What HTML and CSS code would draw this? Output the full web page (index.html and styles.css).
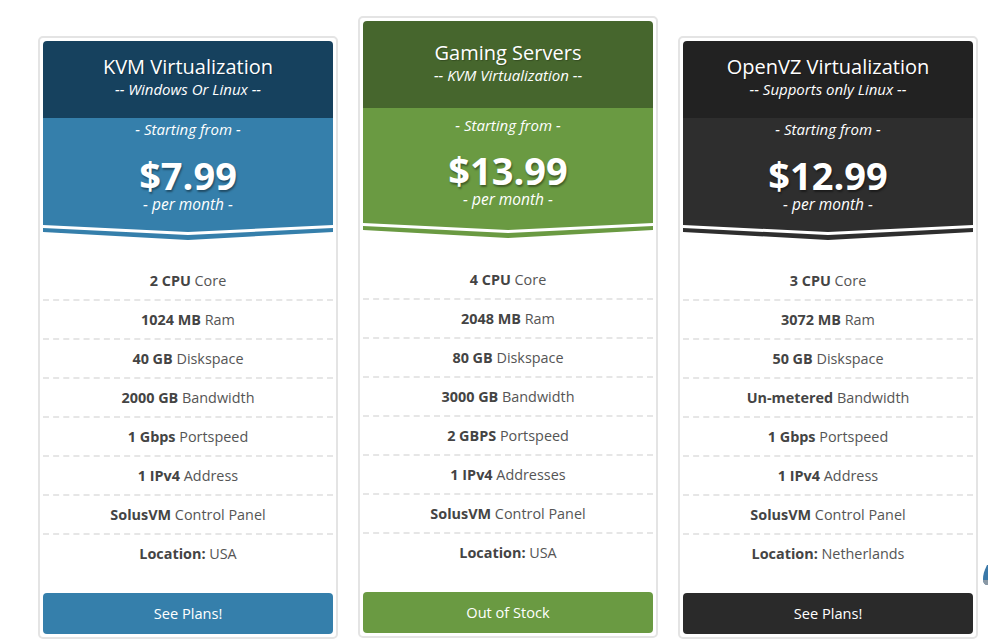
FILE: index.html
```html
<!DOCTYPE html>
<html lang="en">
<head>
<meta charset="utf-8">
<title>Plans</title>
<link rel="stylesheet" href="styles.css">
</head>
<body>
<div class="plans">
  <div class="card card-blue">
    <div class="head">
      <div class="title">KVM Virtualization</div>
      <div class="sub">-- Windows Or Linux --</div>
    </div>
    <div class="price">
      <div class="from">- Starting from -</div>
      <div class="amount">$7.99</div>
      <div class="per">- per month -</div>
    </div>
    <svg class="chev" viewBox="0 0 290 17" preserveAspectRatio="none"><polygon points="0,0 290,0 145,7"/><polygon points="0,3 145,10 290,3 290,7 145,15 0,7"/></svg>
    <ul class="feats">
      <li><b>2 CPU</b> Core</li>
      <li><b>1024 MB</b> Ram</li>
      <li><b>40 GB</b> Diskspace</li>
      <li><b>2000 GB</b> Bandwidth</li>
      <li><b>1 Gbps</b> Portspeed</li>
      <li><b>1 IPv4</b> Address</li>
      <li><b>SolusVM</b> Control Panel</li>
      <li><b>Location:</b> USA</li>
    </ul>
    <a class="btn">See Plans!</a>
  </div>

  <div class="card card-green featured">
    <div class="head">
      <div class="title">Gaming Servers</div>
      <div class="sub">-- KVM Virtualization --</div>
    </div>
    <div class="price">
      <div class="from">- Starting from -</div>
      <div class="amount">$13.99</div>
      <div class="per">- per month -</div>
    </div>
    <svg class="chev" viewBox="0 0 290 17" preserveAspectRatio="none"><polygon points="0,0 290,0 145,7"/><polygon points="0,3 145,10 290,3 290,7 145,15 0,7"/></svg>
    <ul class="feats">
      <li><b>4 CPU</b> Core</li>
      <li><b>2048 MB</b> Ram</li>
      <li><b>80 GB</b> Diskspace</li>
      <li><b>3000 GB</b> Bandwidth</li>
      <li><b>2 GBPS</b> Portspeed</li>
      <li><b>1 IPv4</b> Addresses</li>
      <li><b>SolusVM</b> Control Panel</li>
      <li><b>Location:</b> USA</li>
    </ul>
    <a class="btn">Out of Stock</a>
  </div>

  <div class="card card-dark">
    <div class="head">
      <div class="title">OpenVZ Virtualization</div>
      <div class="sub">-- Supports only Linux --</div>
    </div>
    <div class="price">
      <div class="from">- Starting from -</div>
      <div class="amount">$12.99</div>
      <div class="per">- per month -</div>
    </div>
    <svg class="chev" viewBox="0 0 290 17" preserveAspectRatio="none"><polygon points="0,0 290,0 145,7"/><polygon points="0,3 145,10 290,3 290,7 145,15 0,7"/></svg>
    <ul class="feats">
      <li><b>3 CPU</b> Core</li>
      <li><b>3072 MB</b> Ram</li>
      <li><b>50 GB</b> Diskspace</li>
      <li><b>Un-metered</b> Bandwidth</li>
      <li><b>1 Gbps</b> Portspeed</li>
      <li><b>1 IPv4</b> Address</li>
      <li><b>SolusVM</b> Control Panel</li>
      <li><b>Location:</b> Netherlands</li>
    </ul>
    <a class="btn">See Plans!</a>
  </div>
</div>
<svg class="edge-icon" viewBox="0 0 12 24"><path d="M6 2 C3 8 2 12 2 16 C2 20 4 22 7 22 L12 22 L12 2 Z" fill="#3a78a8"/><path d="M2 17 L12 17 L12 22 L6 22 C4 22 2 20 2 17 Z" fill="#8a98a4"/></svg>
</body>
</html>
```

FILE: styles.css
```css
* { box-sizing: border-box; }
html, body { margin: 0; padding: 0; background: #fff; overflow: hidden; }
body {
  width: 988px;
  height: 639px;
  position: relative;
  font-family: "Open Sans", "Noto Sans", sans-serif;
}
.plans {
  display: flex;
  align-items: flex-start;
  gap: 20px;
  padding: 16px 0 0 38px;
}
.card {
  width: 300px;
  margin-top: 20px;
  border: 2px solid #e4e4e4;
  border-radius: 5px;
  padding: 3px;
  display: flex;
  flex-direction: column;
  background: #fff;
}
.card.featured { margin-top: 0; }

.head {
  height: 77px;
  padding-top: 14px;
  text-align: center;
  color: #fff;
  border-radius: 4px 4px 0 0;
}
.featured .head { height: 87px; padding-top: 20px; }
.title {
  font-size: 20px;
  line-height: 24px;
  text-shadow: 1px 1px 1px rgba(0,0,0,0.25);
}
.sub {
  font-size: 15px;
  line-height: 20px;
  font-style: italic;
}
.price {
  height: 107px;
  padding-top: 1px;
  text-align: center;
  color: #fff;
}
.featured .price { height: 115px; padding-top: 7px; }
.from {
  font-size: 15px;
  line-height: 20px;
  font-style: italic;
}
.per {
  font-size: 15.5px;
  line-height: 18px;
  font-style: italic;
  margin-top: 3px;
}
.amount {
  margin-top: 19px;
  font-size: 38px;
  line-height: 34px;
  font-weight: 700;
  text-shadow: 1px 2px 2px rgba(0,0,0,0.4);
}
.featured .amount { margin-top: 18px; }
.chev {
  display: block;
  width: 290px;
  height: 17px;
}
.feats {
  list-style: none;
  margin: 0;
  padding: 20px 0 0;
}
.featured .feats { padding-top: 21px; }
.feats li {
  height: 39px;
  line-height: 37px;
  text-align: center;
  font-size: 14.4px;
  color: #555;
  border-bottom: 2px dashed #e6e6e6;
}
.feats li:last-child { border-bottom-color: transparent; }
.feats b { color: #444; font-weight: 700; }
.btn {
  display: block;
  margin-top: 19px;
  height: 41px;
  line-height: 41px;
  text-align: center;
  color: #fff;
  font-size: 14.6px;
  border-radius: 4px;
}

.card-blue .head { background: #16415e; }
.card-blue .price, .card-blue .btn { background: #357fab; }
.card-blue .chev polygon { fill: #357fab; }

.card-green .head { background: #46662d; }
.card-green .price, .card-green .btn { background: #6a9a42; }
.card-green .chev polygon { fill: #6a9a42; }

.card-dark .head { background: #222222; }
.card-dark .price { background: #2e2e2e; }
.card-dark .btn { background: #2a2a2a; }
.card-dark .chev polygon { fill: #2e2e2e; }

.edge-icon {
  position: absolute;
  left: 981px;
  top: 563px;
  width: 12px;
  height: 24px;
}
```
